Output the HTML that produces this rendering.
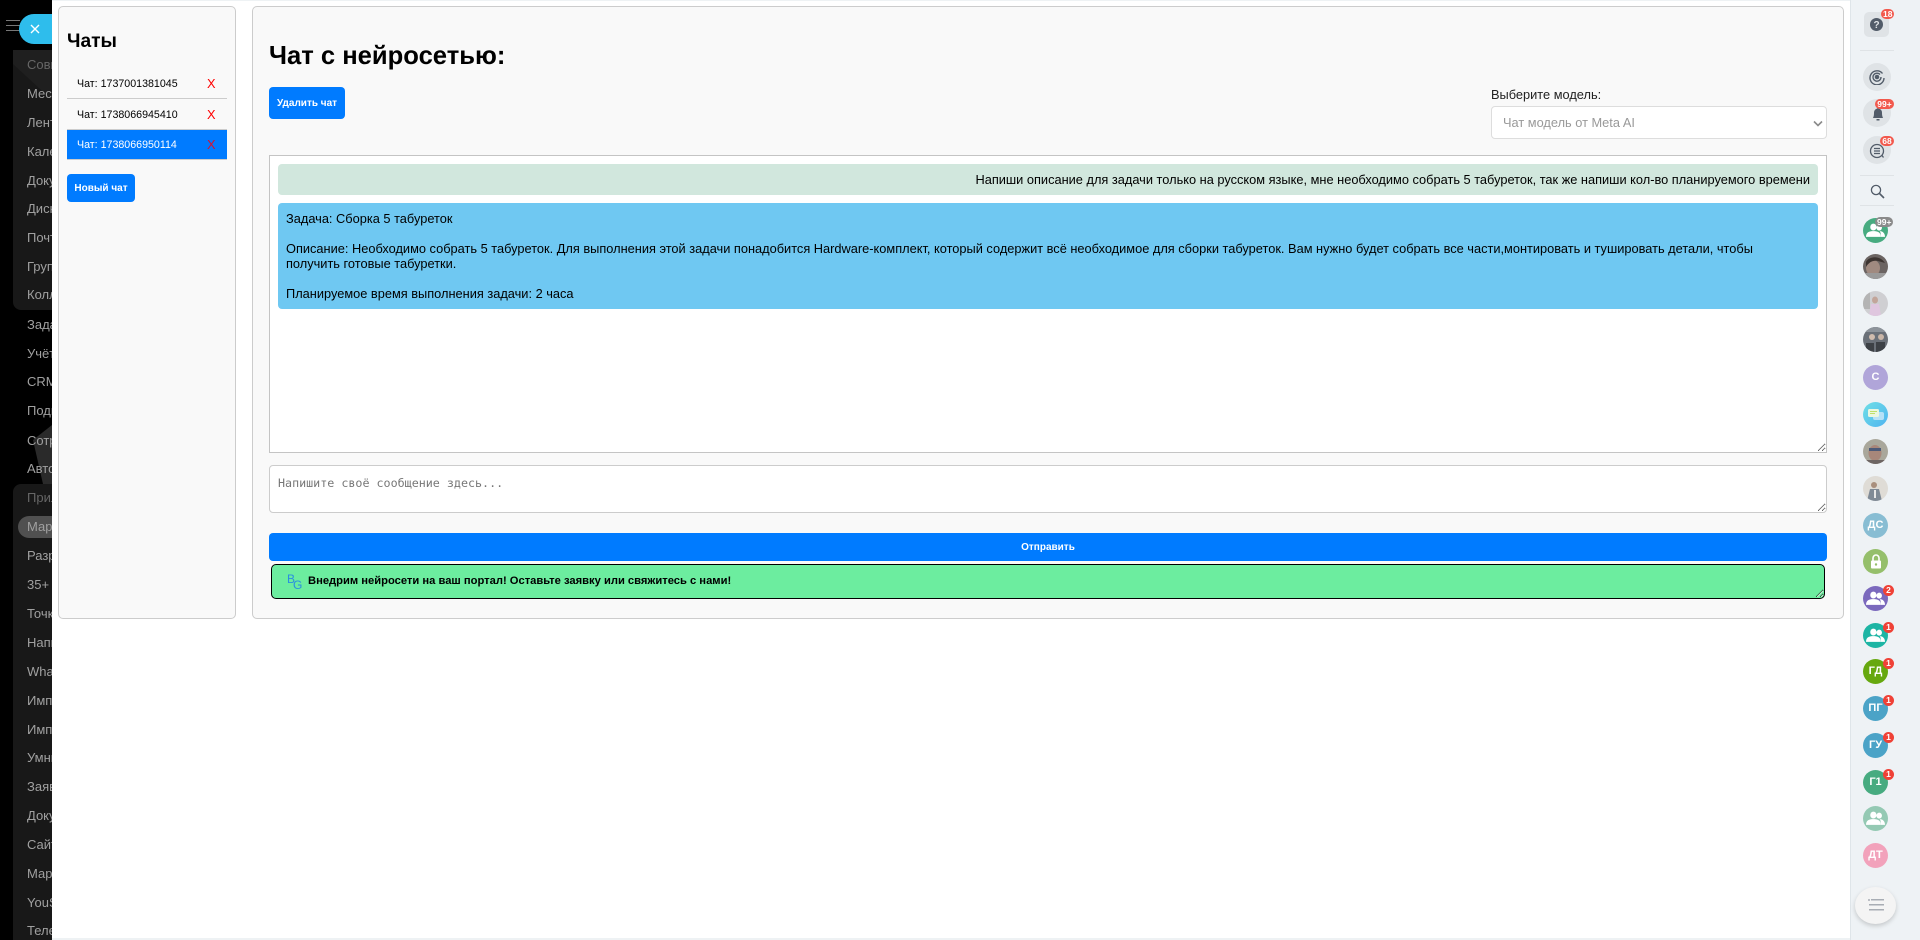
<!DOCTYPE html>
<html lang="ru">
<head>
<meta charset="utf-8">
<title>Чат с нейросетью</title>
<style>
*{box-sizing:border-box}
html,body{margin:0;padding:0;width:1920px;height:940px;overflow:hidden;background:#fff;font-family:"Liberation Sans","Noto Sans CJK SC",sans-serif;color:#000}
#dark{position:absolute;left:0;top:0;width:52px;height:940px;background:#000;overflow:hidden}
#dark .grp{position:absolute;left:13px;width:60px;background:#181818;border-radius:8px}
#dark .it{position:absolute;left:27px;font-size:13px;line-height:16px;color:#a0a0a0;white-space:nowrap}
#dark .h{color:#666}
#pill{position:absolute;left:18px;top:516px;width:50px;height:22px;border-radius:11px;background:#505050}
#burger{position:absolute;left:6px;top:20px;width:14px;height:11px;border-top:1px solid #777;border-bottom:1px solid #777}
#burger:after{content:"";position:absolute;left:0;right:0;top:4px;border-top:1px solid #777}
#xbtn{position:absolute;left:19px;top:14px;width:50px;height:30px;border-radius:15px;background:#2ebdec}
#white{position:absolute;left:52px;top:1px;width:1799px;height:937px;background:#fff}
#topline{position:absolute;left:52px;top:0;width:1799px;height:1px;background:#eef2f4}
#bottomline{position:absolute;left:52px;top:938px;width:1799px;height:2px;background:#eef2f4}
.panel{position:absolute;background:#f9f9f9;border:1px solid #ccc;border-radius:5px}
h2{position:absolute;margin:0;font-weight:bold;white-space:nowrap}
.chat{position:absolute;left:67px;width:160px;height:30px;font-size:10.67px;line-height:30px;padding-left:10px;border-bottom:1px solid #ccc}
.chat b{position:absolute;left:140px;top:0;font-weight:normal;font-size:12.8px;color:#f00}
.btn{position:absolute;background:#007bff;color:#fff;font-weight:bold;font-size:10px;border-radius:4px;text-align:center}
#chatbox{position:absolute;left:269px;top:155px;width:1558px;height:298px;background:#fff;border:1px solid #c4c4c4;resize:both;overflow:hidden}
.msg{position:absolute;left:8px;width:1540px;border-radius:4px;font-size:12.8px;line-height:15px}
textarea{position:absolute;left:269px;top:465px;width:1558px;height:48px;border:1px solid #ccc;border-radius:4px;padding:10px 8px 8px;background:#fff;font-family:"DejaVu Sans Mono",monospace;font-size:11.7px;line-height:14px;margin:0;outline:0}
textarea::placeholder{color:#777}
#promo{position:absolute;left:271px;top:564px;width:1554px;height:35px;background:#6ced9f;border:1.5px solid #000;border-radius:5px;resize:both;overflow:hidden;font-size:11.2px;font-weight:bold;line-height:32px;padding-left:36px}
select{position:absolute;left:1491px;top:106px;width:336px;height:33px;background:#fff;border:1px solid #ddd;border-radius:4px;color:#999;font-size:12.8px;font-family:"Liberation Sans",sans-serif;padding:0 11px;margin:0;opacity:1;appearance:none;-webkit-appearance:none}
#right{position:absolute;left:1850px;top:0;width:70px;height:940px;background:#eef2f5;border-left:1px solid #dfe5e9}
.div{position:absolute;left:1860px;width:34px;height:1px;background:#dfe3e6}
.round{position:absolute;left:1863px;width:28px;height:28px;border-radius:50%;background:#dfe3e6}
.av{position:absolute;left:1863px;width:25px;height:25px;border-radius:50%;color:#fff;font-size:11px;font-weight:bold;line-height:25px;text-align:center;overflow:hidden}
.bdg{position:absolute;height:11px;min-width:11px;padding:0 2px;border-radius:6px;background:#f2594d;color:#fff;font-size:8.5px;font-weight:bold;line-height:11px;text-align:center}
svg{position:absolute;display:block}
.pp{left:3px;top:5px}
</style>
</head>
<body>
<div id="dark">
  <div class="grp" style="top:50px;height:260px"></div>
  <div class="grp" style="top:484px;height:470px"></div>
  <svg style="left:0;top:0" width="52" height="940"><polygon points="13,64 52,100 52,50 13,50" fill="#1f1f1f"/><polygon points="33,440 52,425 52,484 43,484" fill="#2a2a2a"/></svg>
  <div id="pill"></div>
  <div class="it h" style="top:57px">Совместная работа</div>
  <div class="it" style="top:86px">Мессенджер</div>
  <div class="it" style="top:115px">Лента</div>
  <div class="it" style="top:144px">Календарь</div>
  <div class="it" style="top:173px">Документы</div>
  <div class="it" style="top:201px">Диск</div>
  <div class="it" style="top:230px">Почта</div>
  <div class="it" style="top:259px">Группы</div>
  <div class="it" style="top:287px">Коллабы</div>
  <div class="it" style="top:317px">Задачи</div>
  <div class="it" style="top:346px">Учёт</div>
  <div class="it" style="top:374px">CRM</div>
  <div class="it" style="top:403px">Подпись</div>
  <div class="it" style="top:433px">Сотрудники</div>
  <div class="it" style="top:461px">Автоматизация</div>
  <div class="it h" style="top:490px">Приложения</div>
  <div class="it" style="top:519px">Маркет</div>
  <div class="it" style="top:548px">Разработчикам</div>
  <div class="it" style="top:577px">35+</div>
  <div class="it" style="top:606px">Точки</div>
  <div class="it" style="top:635px">Напишите</div>
  <div class="it" style="top:664px">WhatsApp</div>
  <div class="it" style="top:693px">Импорт</div>
  <div class="it" style="top:722px">Импорт</div>
  <div class="it" style="top:750px">Умные</div>
  <div class="it" style="top:779px">Заявки</div>
  <div class="it" style="top:808px">Документы</div>
  <div class="it" style="top:837px">Сайты</div>
  <div class="it" style="top:866px">Маркетинг</div>
  <div class="it" style="top:895px">YouScan</div>
  <div class="it" style="top:923px">Телефония</div>
  <div id="burger"></div>
  <div id="xbtn"></div>
  <svg style="left:29px;top:23px" width="12" height="12" viewBox="0 0 12 12"><path d="M2 2L10 10M10 2L2 10" stroke="#fff" stroke-width="1.4" fill="none"/></svg>
</div>

<div id="white"></div>
<div id="topline"></div>
<div id="bottomline"></div>

<div class="panel" style="left:58px;top:6px;width:178px;height:613px"></div>
<h2 style="left:67px;top:30px;font-size:19.2px;line-height:24px">Чаты</h2>
<div class="chat" style="top:69px">Чат: 1737001381045<b>X</b></div>
<div class="chat" style="top:100px">Чат: 1738066945410<b>X</b></div>
<div class="chat" style="top:130px;background:#007bff;color:#fff">Чат: 1738066950114<b style="color:#d8112f">X</b></div>
<div class="btn" style="left:67px;top:174px;width:68px;height:28px;line-height:29px">Новый чат</div>

<div class="panel" style="left:252px;top:6px;width:1592px;height:613px"></div>
<h2 style="left:269px;top:41px;font-size:25.6px;line-height:30px">Чат с нейросетью:</h2>
<div class="btn" style="left:269px;top:87px;width:76px;height:32px;line-height:34px">Удалить чат</div>
<div style="position:absolute;left:1491px;top:87px;font-size:12.8px;line-height:16px;color:#222">Выберите модель:</div>
<select disabled><option>Чат модель от Meta AI</option></select>
<svg style="left:1813px;top:120px" width="10" height="7" viewBox="0 0 10 7"><path d="M1 1.500L5 5.500L9 1.500" fill="none" stroke="#8a8a8a" stroke-width="1.600"/></svg>

<div id="chatbox">
  <div class="msg" style="top:8px;height:31px;background:#d1e7dd;text-align:right;padding:6px 8px 0 8px;line-height:19px">Напиши описание для задачи только на русском языке, мне необходимо собрать 5 табуреток, так же напиши кол-во планируемого времени</div>
  <div class="msg" style="top:47px;height:106px;background:#6fc8f2;padding:8px">Задача: Сборка 5 табуреток<br><br>Описание: Необходимо собрать 5 табуреток. Для выполнения этой задачи понадобится Hardware-комплект, который содержит всё необходимое для сборки табуреток. Вам нужно будет собрать все части,монтировать и тушировать детали, чтобы получить готовые табуретки.<br><br>Планируемое время выполнения задачи: 2 часа</div>
</div>
<textarea placeholder="Напишите своё сообщение здесь..."></textarea>
<div class="btn" style="left:269px;top:533px;width:1558px;height:28px;line-height:29px">Отправить</div>
<div id="promo">Внедрим нейросети на ваш портал! Оставьте заявку или свяжитесь с нами!</div>
<svg style="left:286px;top:571px" width="18" height="20" viewBox="0 0 18 20"><text x="1" y="12" font-family="Liberation Sans,sans-serif" font-size="12" fill="#2a8fe0">B</text><text x="7" y="18" font-family="Liberation Sans,sans-serif" font-size="12" fill="#2a8fe0">G</text></svg>

<div id="right"></div>
<div style="position:absolute;left:1864px;top:12px;width:25px;height:25px;border-radius:5px;background:#dfe3e6"></div>
<svg style="left:1870px;top:18px" width="13" height="13" viewBox="0 0 13 13"><circle cx="6.5" cy="6.5" r="6.5" fill="#525c69"/><text x="6.5" y="10" font-family="Liberation Sans,sans-serif" font-size="10" font-weight="bold" fill="#dfe3e6" text-anchor="middle">?</text></svg>
<div class="bdg" style="left:1881px;top:9px;min-width:13px;height:10px;line-height:10px">18</div>
<div class="div" style="top:50px"></div>
<div class="round" style="top:63px"></div>
<svg style="left:1869px;top:69px" width="16" height="16" viewBox="0 0 16 16" fill="none" stroke="#525c69" stroke-width="1.4"><path d="M13.5 4.5A7 7 0 1 0 15 9"/><path d="M11 5.5A4 4 0 1 0 12 8"/><circle cx="8" cy="8" r="1.6" fill="#525c69"/></svg>
<div class="round" style="top:99px"></div>
<svg style="left:1871px;top:107px" width="14" height="14" viewBox="0 0 14 14"><path d="M2 11C3 9 3 7 3 5.5A4 4 0 0 1 11 5.5C11 7 11 9 12 11ZM5.5 12h3V13.500h-3ZM6.200 0.500h1.600v1.500h-1.600Z" fill="#525c69"/></svg>
<div class="bdg" style="left:1875px;top:99px;min-width:19px;height:10px;line-height:10px">99+</div>
<div class="round" style="top:136px"></div>
<svg style="left:1869px;top:143px" width="16" height="16" viewBox="0 0 16 16" fill="none" stroke="#525c69" stroke-width="1.3"><circle cx="8" cy="8" r="6.500"/><path d="M5 5.500h6M5 8h6M5 10.500h6M13 12.500l1.500 2"/></svg>
<div class="bdg" style="left:1880px;top:136px;min-width:14px;height:10px;line-height:10px">68</div>
<div class="div" style="top:175px"></div>
<svg style="left:1870px;top:184px" width="15" height="15" viewBox="0 0 15 15" fill="none" stroke="#525c69" stroke-width="1.3"><circle cx="6" cy="6" r="4.600"/><path d="M9.500 9.500L14 14" stroke-width="1.600"/></svg>
<div class="div" style="top:205px"></div>

<div class="av" style="top:218px;background:#47ab80"><svg class="pp" width="19" height="15" viewBox="0 0 18 13" preserveAspectRatio="none" fill="#fff"><circle cx="7" cy="3.500" r="3"/><path d="M0 12c0-4 3-5 7-5s7 1 7 5z"/><circle cx="12.500" cy="4" r="2.600"/><path d="M14 12h4c0-3-2-5-5-5 1 1 1 3 1 5z"/></svg></div>
<div class="bdg" style="left:1875px;top:217px;min-width:17px;height:10px;line-height:10px;background:#8a8a8a">99+</div>
<div class="av" style="top:254px;background:#6b6462"><svg style="left:0;top:0" width="25" height="25"><ellipse cx="10" cy="14" rx="7" ry="8" fill="#a08a80"/><path d="M3 8C6 2 17 1 22 9L15 7C10 6 6 8 3 13Z" fill="#3c3431"/><rect x="0" y="19" width="25" height="6" fill="#9a9a9a"/></svg></div>
<div class="av" style="top:291px;background:#cfcfd2"><svg style="left:0;top:0" width="25" height="25"><ellipse cx="12" cy="9" rx="3" ry="3.500" fill="#c2a59a"/><path d="M8 13h8l2 12H6z" fill="#dfc6df"/><rect x="0" y="0" width="7" height="18" fill="#b4b4b4"/></svg></div>
<div class="av" style="top:327px;background:#6a7078"><svg style="left:0;top:0" width="25" height="25"><circle cx="9" cy="10" r="3" fill="#d0bcae"/><circle cx="18" cy="10" r="3" fill="#c9b6a8"/><path d="M3 25V16h8v9zM13 25V15h9v10z" fill="#3d4146"/><rect x="0" y="0" width="25" height="5" fill="#8d939a"/></svg></div>
<div class="av" style="top:365px;background:#b0a5d9">С</div>
<div class="av" style="top:402px;background:linear-gradient(135deg,#6fe0e6,#4fb3f0)"><svg style="left:4px;top:6px" width="18" height="14" viewBox="0 0 18 14"><rect x="6" y="4" width="11" height="8" rx="2" fill="#b6e1f7"/><rect x="1" y="1" width="11" height="8" rx="1.500" fill="#eaf7e0"/><path d="M3 3.500h7M3 5.500h5" stroke="#bfe06a" stroke-width="1"/></svg></div>
<div class="av" style="top:439px;background:#a9a79b"><svg style="left:0;top:0" width="25" height="25"><ellipse cx="12" cy="14" rx="6.500" ry="8" fill="#a8877a"/><rect x="6" y="9" width="12" height="3" fill="#4c5a78"/><path d="M0 21L25 21V25H0Z" fill="#6d6563"/></svg></div>
<div class="av" style="top:476px;background:#dfdcd6"><svg style="left:0;top:0" width="25" height="25"><circle cx="11" cy="9" r="3" fill="#a98f7d"/><path d="M7 13h9l3 12H4z" fill="#7f8a96"/><rect x="11" y="14" width="2" height="8" fill="#e7e7e7"/></svg></div>
<div class="av" style="top:513px;background:#88bdd3">ДС</div>
<div class="av" style="top:549px;background:#95bf6b"><svg style="left:7px;top:5px" width="12" height="15" viewBox="0 0 12 15"><path d="M3 7V4a3 3 0 0 1 6 0v3" fill="none" stroke="#fff" stroke-width="1.600"/><rect x="1" y="6.500" width="10" height="8" rx="1" fill="#fff"/><circle cx="6" cy="10.500" r="1.200" fill="#95bf6b"/></svg></div>
<div class="av" style="top:586px;background:#7b69bd"><svg class="pp" width="19" height="15" viewBox="0 0 18 13" preserveAspectRatio="none" fill="#fff"><circle cx="7" cy="3.500" r="3"/><path d="M0 12c0-4 3-5 7-5s7 1 7 5z"/><circle cx="12.500" cy="4" r="2.600"/><path d="M14 12h4c0-3-2-5-5-5 1 1 1 3 1 5z"/></svg></div>
<div class="bdg" style="left:1883px;top:585px;background:#ef4136">2</div>
<div class="av" style="top:623px;background:#1db5a4"><svg class="pp" width="19" height="15" viewBox="0 0 18 13" preserveAspectRatio="none" fill="#fff"><circle cx="7" cy="3.500" r="3"/><path d="M0 12c0-4 3-5 7-5s7 1 7 5z"/><circle cx="12.500" cy="4" r="2.600"/><path d="M14 12h4c0-3-2-5-5-5 1 1 1 3 1 5z"/></svg></div>
<div class="bdg" style="left:1883px;top:622px;background:#ef4136">1</div>
<div class="av" style="top:659px;background:#66a80f">ГД</div>
<div class="bdg" style="left:1883px;top:658px;background:#ef4136">1</div>
<div class="av" style="top:696px;background:#4ba3c7">ПГ</div>
<div class="bdg" style="left:1883px;top:695px;background:#ef4136">1</div>
<div class="av" style="top:733px;background:#4ba3c7">ГУ</div>
<div class="bdg" style="left:1883px;top:732px;background:#ef4136">1</div>
<div class="av" style="top:770px;background:#47ab80">Г1</div>
<div class="bdg" style="left:1883px;top:769px;background:#ef4136">1</div>
<div class="av" style="top:806px;background:#94c9b3"><svg class="pp" width="19" height="15" viewBox="0 0 18 13" preserveAspectRatio="none" fill="#fff"><circle cx="7" cy="3.500" r="3"/><path d="M0 12c0-4 3-5 7-5s7 1 7 5z"/><circle cx="12.500" cy="4" r="2.600"/><path d="M14 12h4c0-3-2-5-5-5 1 1 1 3 1 5z"/></svg></div>
<div class="av" style="top:843px;background:#f2a2bb">ДТ</div>
<div style="position:absolute;left:1855px;top:887px;width:41px;height:37px;border-radius:50%;background:#f4f4f4;box-shadow:0 2px 5px rgba(0,0,0,.18)"></div>
<svg style="left:1868px;top:899px" width="16" height="12" viewBox="0 0 16 12" fill="#a8adb4"><rect x="0" y="0" width="2" height="2" rx="1"/><rect x="3" y="0" width="13" height="1.500"/><rect x="1" y="5" width="15" height="1.500"/><rect x="1" y="10" width="15" height="1.500"/></svg>
</body>
</html>
